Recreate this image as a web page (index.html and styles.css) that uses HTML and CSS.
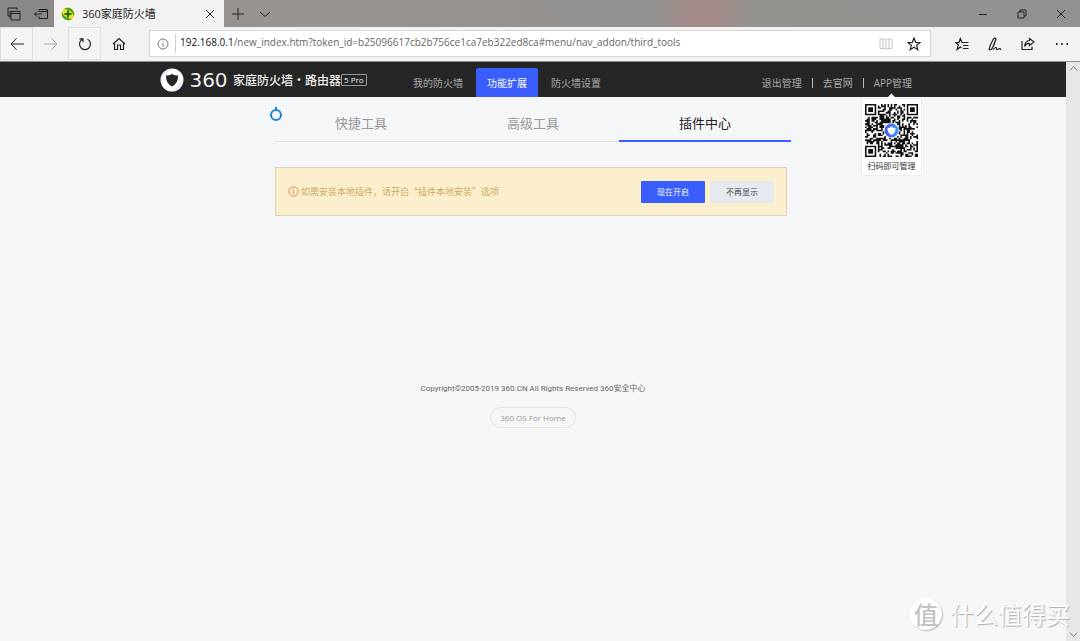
FILE: index.html
```html
<!DOCTYPE html>
<html lang="zh-CN">
<head>
<meta charset="utf-8">
<meta name="viewport" content="width=device-width, initial-scale=1">
<title>360家庭防火墙</title>
<link rel="stylesheet" href="styles.css">
</head>
<body>
<div class="browser">
  <div class="tabbar">
    <div class="tab-tools">
      <button class="tab-tool" aria-label="已搁置的标签页"><svg width="14" height="14" viewBox="0 0 14 14"><path d="M1 9V1h9v2M3 11V3.500M1 9h2M4 4.500h9V13H4zM4 6.500h9"/></svg></button>
      <button class="tab-tool" aria-label="搁置标签页"><svg width="14" height="14" viewBox="0 0 14 14"><path d="M5 4.500V2.500h8.500v9H5v-2M5 4.500h8.500M0.500 7H8M3 4.500 0.500 7 3 9.500"/></svg></button>
    </div>
    <div class="tab">
      <svg class="favicon" width="14" height="14" viewBox="0 0 14 14"><circle cx="7" cy="7" r="6.500" fill="#f8dc1b"/><path d="M3 2A6.500 6.500 0 0 1 13 9Q11 3 3 2zM11 12A6.500 6.500 0 0 1 1 5Q3 11 11 12z" fill="#3ca52e"/><path d="M7 3.500v7M3.500 7h7" stroke="#176f1c" stroke-width="2"/></svg>
      <span class="tab-title">360家庭防火墙</span>
      <button class="tab-close" aria-label="关闭标签页"><svg width="10" height="10" viewBox="0 0 10 10"><path d="M1 1l8 8M9 1 1 9"/></svg></button>
    </div>
    <button class="tab-add" aria-label="新建标签页"><svg width="12" height="12" viewBox="0 0 12 12"><path d="M6 0v12M0 6h12"/></svg></button>
    <button class="tab-add" aria-label="显示标签页预览"><svg width="12" height="12" viewBox="0 0 12 12"><path d="M1 4l5 4.500L11 4"/></svg></button>
    <div class="window-controls">
      <button aria-label="最小化"><svg width="10" height="10" viewBox="0 0 10 10"><path d="M1 5.500h8"/></svg></button>
      <button aria-label="还原"><svg width="10" height="10" viewBox="0 0 10 10"><path d="M1 3h6v6H1zM3 3V1h6v6H7"/></svg></button>
      <button aria-label="关闭"><svg width="10" height="10" viewBox="0 0 10 10"><path d="M1 1l8 8M9 1 1 9"/></svg></button>
    </div>
  </div>

  <div class="toolbar">
    <div class="nav-buttons">
      <button class="tool boxed" aria-label="后退"><svg width="14" height="14" viewBox="0 0 14 14"><path d="M1 7h13M6.500 1.500 1 7l5.500 5.500"/></svg></button>
      <button class="tool faded" aria-label="前进"><svg width="14" height="14" viewBox="0 0 14 14"><path d="M0 7h13M7.500 1.500 13 7l-5.500 5.500"/></svg></button>
      <button class="tool boxed" aria-label="刷新"><svg width="14" height="14" viewBox="0 0 14 14"><path d="M4.500 2.200A5.500 5.500 0 1 0 9.500 2.200M1.500 1.800H5V5.300" stroke-width="1.200"/></svg></button>
      <button class="tool" aria-label="主页"><svg width="14" height="14" viewBox="0 0 14 14"><path d="M1 7l6-5.500L13 7M2.500 6v6.500H5.500V8h3v4.500h3V6" stroke-width="1.200"/></svg></button>
    </div>
    <div class="address">
      <button class="site-info" aria-label="网站信息"><svg width="12" height="12" viewBox="0 0 12 12"><circle cx="6" cy="6" r="5"/><path d="M6 5v4M6 3v1"/></svg></button>
      <a class="url" href="#menu/nav_addon/third_tools"><span class="host">192.168.0.1</span>/new_index.htm?token_id=b25096617cb2b756ce1ca7eb322ed8ca#menu/nav_addon/third_tools</a>
      <button class="in-address reading" aria-label="阅读视图"><svg width="14" height="12" viewBox="0 0 14 12"><path d="M7 1.500v9.500M1 1h4.500L7 2l1.500-1H13v9.500H8.500L7 11.500l-1.500-1H1zM4 1v9M10 1v9"/></svg></button>
      <button class="in-address" aria-label="添加到收藏夹"><svg width="14" height="14" viewBox="0 0 14 14"><path d="M7 1l1.700 4.300 4.300.2-3.400 2.800 1.200 4.400L7 10.200l-3.800 2.500 1.200-4.400L1 5.500l4.300-.2z" stroke-width="1.200"/></svg></button>
    </div>
    <div class="actions">
      <button class="tool" aria-label="收藏夹"><svg width="14" height="14" viewBox="0 0 14 14"><path d="M13.500 5.500H7L5.300 1.500 4 5.500H.5l2.800 2.300-1.200 4.700L5.300 10l1.200 1M8 8.500h5.500M8 11.500h5.500" stroke-width="1.200"/></svg></button>
      <button class="tool" aria-label="添加备注"><svg width="14" height="14" viewBox="0 0 14 14"><path d="M1 13 2.200 8.500 5.500 1.800Q7 .2 8 2L6 8l-2.500 4.200L1 13M8 2 4.800 10M5 12.500Q8.500 9 8.500 11.500q0 2 2 .5 1.500-1 2.700.8" stroke-width="1.200"/></svg></button>
      <button class="tool" aria-label="共享"><svg width="14" height="14" viewBox="0 0 14 14"><path d="M1 4v8.500h10V9.500M8.500 1.500 13 5 8.500 8.500v-2Q5 6.200 3.500 9.500 4 4 8.500 3.500z" stroke-width="1.200"/></svg></button>
      <button class="tool more" aria-label="设置及更多"><svg width="14" height="14" viewBox="0 0 14 14"><path d="M1 7h1.500M6.200 7h1.500M11.500 7H13"/></svg></button>
    </div>
  </div>

  <div class="viewport">
    <div class="page">
      <header class="header">
        <div class="header-inner">
          <a class="brand" href="#home">
            <svg width="24" height="24" viewBox="0 0 24 24"><defs><linearGradient id="ring" x1="0" y1="0" x2="1" y2="1"><stop offset="0" stop-color="#c3cdf4"/><stop offset=".3" stop-color="#fff"/><stop offset=".7" stop-color="#fff"/><stop offset="1" stop-color="#b9c5ee"/></linearGradient></defs><circle cx="12" cy="12" r="11.500" fill="url(#ring)"/><path d="M6 7.500Q9.500 7.500 12 6q2.500 1.500 6 1.500Q18.500 15 12 18.500 5.500 15 6 7.500z" fill="#262626"/></svg>
            <span class="brand-number">360</span>
            <span class="brand-name">家庭防火墙·路由器</span>
            <span class="model">5 Pro</span>
          </a>
          <nav class="menu">
            <a href="#firewall">我的防火墙</a>
            <a class="active" href="#menu/nav_addon">功能扩展</a>
            <a href="#settings">防火墙设置</a>
          </nav>
          <div class="links">
            <a href="#logout">退出管理</a>
            <a href="#site">去官网</a>
            <div class="app">
              <a href="#app">APP管理</a>
              <div class="qr-card">
                <svg id="qr" class="qr" viewBox="0 0 33 33" role="img" aria-label="二维码"></svg>
                <span>扫码即可管理</span>
              </div>
            </div>
          </div>
        </div>
      </header>

      <main class="main">
        <svg class="spinner" width="14" height="16" viewBox="0 0 14 16"><circle cx="7" cy="9" r="7" fill="#fff"/><circle cx="7" cy="9" r="5" fill="#f5f6f8" stroke="#1685d8" stroke-width="2"/><path d="M7 1v3" stroke="#1685d8" stroke-width="2"/></svg>
        <nav class="tabs">
          <a href="#quick">快捷工具</a>
          <a href="#advanced">高级工具</a>
          <a class="active" href="#third_tools">插件中心</a>
        </nav>
        <section class="notice">
          <svg width="11" height="11" viewBox="0 0 11 11"><circle cx="5.500" cy="5.500" r="4.700"/><path d="M5.500 4.800v3.500M5.500 2.500v1.300"/></svg>
          <p>如需安装本地插件，请开启“插件本地安装”选项</p>
          <button class="btn primary">现在开启</button>
          <button class="btn">不再显示</button>
        </section>
      </main>

      <footer class="footer">
        <p>Copyright©2005-2019 360.CN All Rights Reserved 360安全中心</p>
        <a href="#os">360 OS For Home</a>
      </footer>
    </div>
    <div class="scrollbar">
      <svg width="9" height="9" viewBox="0 0 9 9"><path d="M1 6.500l3.500-4L8 6.500"/></svg>
      <svg width="9" height="9" viewBox="0 0 9 9"><path d="M1 2.500l3.500 4L8 2.500"/></svg>
    </div>
  </div>

  <div class="watermark"><span class="badge">值</span><span>什么值得买</span></div>
</div>
<script src="qr.js"></script>
</body>
</html>
```

FILE: styles.css
```css
* { box-sizing: border-box; }
body {
  margin: 0;
  font-family: "Open Sans", "Noto Sans CJK SC", sans-serif;
  background: #f5f6f8;
}
p { margin: 0; }
a { color: inherit; text-decoration: none; }
button {
  display: flex;
  align-items: center;
  justify-content: center;
  padding: 0;
  border: 0;
  background: none;
  font-family: inherit;
}
svg { display: block; flex: none; }
.tabbar svg, .toolbar svg, .scrollbar svg, .notice svg { fill: none; stroke: #222; }
.tabbar .favicon { stroke: none; }

.browser {
  position: relative;
  display: flex;
  flex-direction: column;
  min-height: 100vh;
}

.tabbar {
  display: flex;
  height: 27px;
  background: linear-gradient(90deg, #949290, #989492 30%, #949290 61%, #a58a8a 64%, #a58a8a 66%, #949390 69%, #92918f);
}
.tab-tools { display: flex; width: 54px; background: #8b8988; }
.tab-tool { width: 27px; }
.tab {
  display: flex;
  align-items: center;
  gap: 7px;
  width: 170px;
  padding: 0 9px 0 7px;
  background: #f2f2f2;
  font-size: 11px;
  color: #222;
}
.tab-title { flex: 1; padding-bottom: 2px; white-space: nowrap; }
.tab-add { width: 27px; }
.window-controls { display: flex; margin-left: auto; }
.window-controls button { width: 39px; }

.toolbar {
  display: flex;
  height: 35px;
  padding-bottom: 1px;
  background: #f2f2f2;
  border-bottom: 1px solid #8b8b8b;
}
.nav-buttons { display: flex; gap: 1px; }
.tool { width: 33px; }
.tool.boxed { border: 1px solid #dedede; background: #f4f4f4; }
.toolbar .faded svg { stroke: #aaa; }
.tool.more { width: 36px; }
.toolbar .more svg { stroke-width: 2; }
.address {
  display: flex;
  align-items: center;
  flex: 1;
  min-width: 0;
  margin: 3px 14px;
  padding-right: 2px;
  border: 1px solid #d6d6d6;
  background: #fff;
}
.site-info { width: 26px; height: 19px; border-right: 1px solid #ccc; }
.address .site-info svg { stroke: #777; }
.url {
  flex: 1;
  overflow: hidden;
  padding: 0 4px 4px;
  font-size: 10px;
  color: #666;
  white-space: nowrap;
}
.host { color: #111; }
.in-address { width: 28px; }
.address .reading svg { stroke: #c4c4c4; }
.actions { display: flex; }

.viewport { display: flex; flex: 1; }
.page { flex: 1; min-width: 0; }
.scrollbar {
  display: flex;
  flex-direction: column;
  justify-content: space-between;
  align-items: center;
  width: 14px;
  padding: 2px 0;
  background: #e7e7e7;
}
.scrollbar svg { stroke: #888; }

.header { background: #262626; }
.header-inner {
  display: flex;
  max-width: 766px;
  height: 35px;
  margin: 0 auto;
  padding: 0 4px 0 10px;
  font-size: 10px;
  color: #a9a9a9;
}
.brand { display: flex; align-items: center; width: 242px; color: #eee; white-space: nowrap; }
.brand-number {
  width: 49px;
  font-family: "DejaVu Sans", sans-serif;
  font-size: 20px;
  line-height: 24px;
  text-align: center;
}
.brand-name { font-family: "Noto Sans CJK SC", sans-serif; font-size: 12px; font-weight: 500; }
.model {
  padding: 0 2px;
  border: 1px solid #999;
  border-radius: 1px;
  font-size: 8px;
  line-height: 10px;
}
.menu { display: flex; align-items: flex-end; gap: 2px; }
.menu a {
  height: 29px;
  padding: 0 11px;
  border-radius: 2px 2px 0 0;
  line-height: 30px;
  white-space: nowrap;
}
.menu .active { background: #3a5efb; color: #fff; }
.links {
  display: flex;
  gap: 10px;
  margin-left: auto;
  padding-top: 6px;
  line-height: 30px;
  white-space: nowrap;
}
.links > * + * { display: flex; align-items: center; gap: 10px; }
.links > * + *::before { content: ""; width: 1px; height: 10px; background: #bbb; }
.app { position: relative; }
.qr-card {
  position: absolute;
  top: 30px;
  right: -10px;
  width: 61px;
  padding: 5px 3px 0;
  border: 1px solid #ececee;
  background: #fff;
  font-size: 8px;
  line-height: 18px;
  text-align: center;
  color: #333;
}
.qr-card::before {
  content: "";
  position: absolute;
  top: -4px;
  left: 26px;
  width: 7px;
  height: 7px;
  background: #fff;
  transform: rotate(45deg);
}
.qr { position: relative; width: 100%; }

.main { position: relative; max-width: 516px; margin: 0 auto; }
.spinner { position: absolute; left: -6px; top: 9px; }
.tabs { display: grid; grid-template-columns: repeat(3, 1fr); }
.tabs a {
  height: 45px;
  padding-top: 9px;
  border-bottom: 1px solid #dfe1e5;
  font-size: 13px;
  line-height: 34px;
  text-align: center;
  color: #999;
}
.tabs .active { border-bottom: 2px solid #3a5efb; color: #222; }
.notice {
  display: flex;
  align-items: center;
  height: 49px;
  margin: 25px 4px 0 0;
  padding: 0 12px;
  border: 1px solid #dfd3b4;
  background: #fcefcd;
}
.notice svg { stroke: #f5803c; }
.notice p {
  flex: 1;
  padding-left: 2px;
  font-family: "Noto Sans CJK SC", sans-serif;
  font-size: 9px;
  color: #cbac69;
}
.btn {
  width: 64px;
  height: 22px;
  margin-left: 5px;
  border-radius: 1px;
  background: #e7e9f0;
  font-size: 8px;
  color: #444;
}
.btn.primary { background: #3a5efb; color: #fff; }

.footer {
  display: flex;
  flex-direction: column;
  align-items: center;
  gap: 12px;
  padding: 166px 0 20px;
  font-family: Roboto, "Noto Sans CJK SC", sans-serif;
  font-size: 8px;
  line-height: 13px;
  color: #666;
}
.footer a {
  padding: 3px 9px;
  border: 1px solid #e3e4e7;
  border-radius: 11px;
  font-family: "Open Sans", sans-serif;
  color: #999;
}

.watermark {
  position: absolute;
  right: 10px;
  bottom: 11px;
  display: flex;
  align-items: center;
  gap: 8px;
  font-family: "Noto Sans CJK SC", sans-serif;
  font-size: 24px;
  line-height: 32px;
  color: #fff;
  text-shadow: 1px 1px 1px #aaa;
}
.badge {
  width: 32px;
  height: 32px;
  border-radius: 50%;
  background: #fff;
  box-shadow: 1px 1px 1px #bbb;
  font-weight: 500;
  text-align: center;
  color: #c3c3c3;
  text-shadow: none;
}
```

FILE: qr.js
```js
const size = 33;
const finders = [[0, 0], [size - 7, 0], [0, size - 7]];
let seed = 360;

function noise() {
  seed = (seed * 1103515245 + 12345) % 2147483648;
  return seed / 2147483648;
}

function isDark(x, y) {
  const random = noise() < 0.53;
  for (const [fx, fy] of finders) {
    const ring = Math.max(Math.abs(x - fx - 3), Math.abs(y - fy - 3));
    if (ring <= 4) return ring === 3 || ring <= 1;
  }
  return random && Math.hypot(x - 16, y - 16) > 5;
}

let modules = "";
for (let y = 0; y < size; y++) {
  for (let x = 0; x < size; x++) {
    if (isDark(x, y)) modules += `M${x} ${y}h1v1h-1z`;
  }
}

document.getElementById("qr").innerHTML =
  `<defs><linearGradient id="mark" x1="0" x2="1"><stop stop-color="#514ef2"/><stop offset="1" stop-color="#36a0ff"/></linearGradient></defs>
  <path d="${modules}" fill="#111"/>
  <circle cx="16.500" cy="16.500" r="4.300" fill="url(#mark)"/>
  <path d="M14 15q1.500 0 2.500-1 1 1 2.500 1 .3 3-2.500 4.300Q13.700 18 14 15z" fill="#fff"/>`;
```
